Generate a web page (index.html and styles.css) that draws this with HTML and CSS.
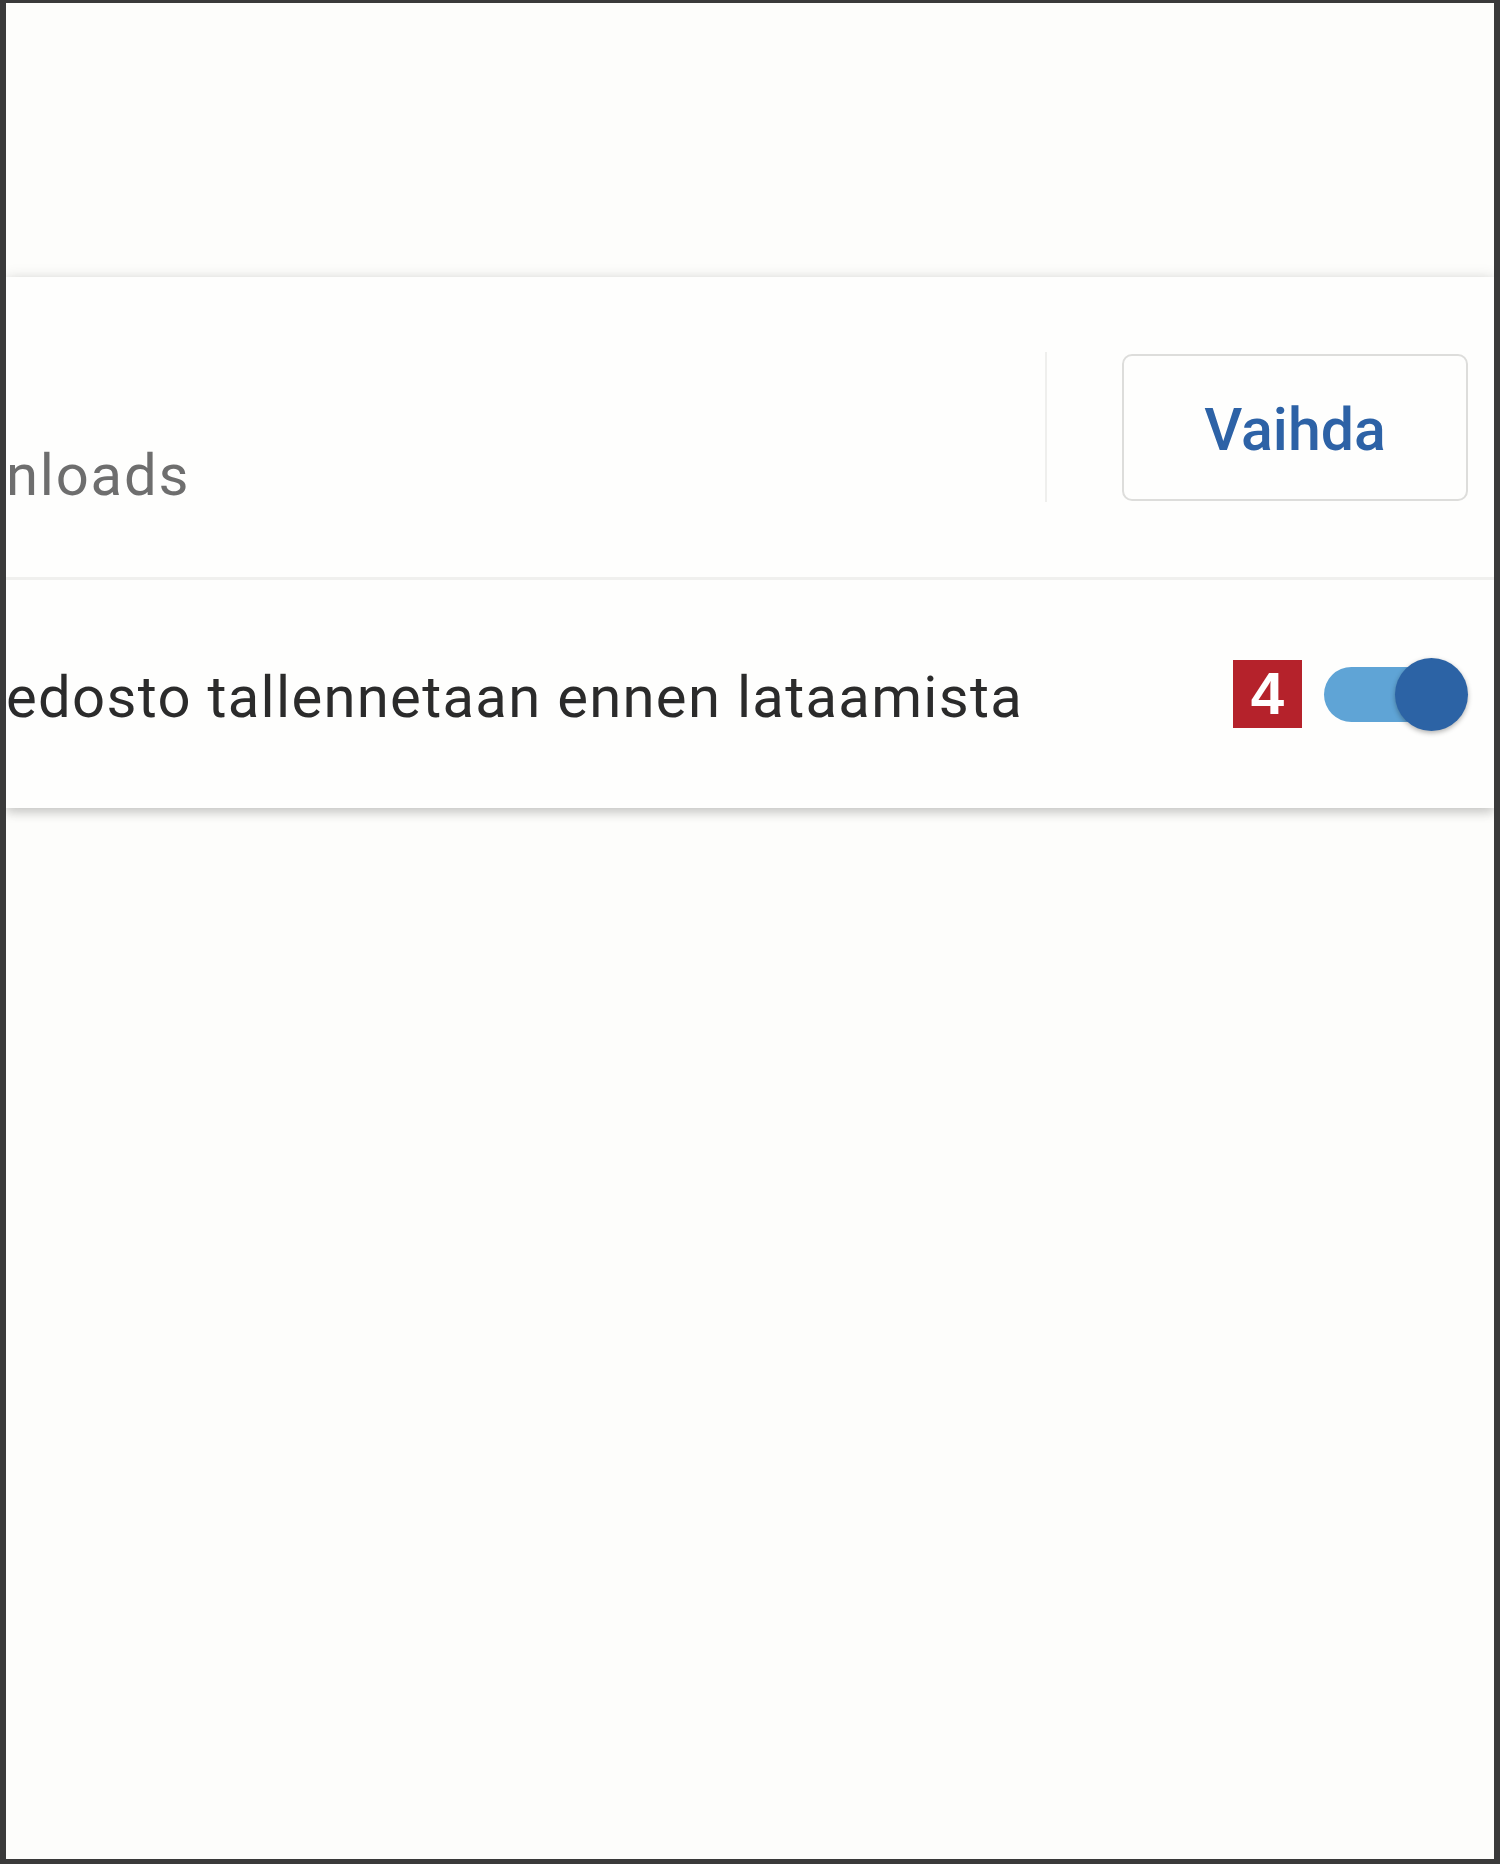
FILE: index.html
```html
<!DOCTYPE html>
<html lang="fi">
<head>
    <meta charset="UTF-8">
    <meta name="viewport" content="width=device-width, initial-scale=1.0">
    <title>Lataukset</title>
    <link rel="stylesheet" href="styles.css">
</head>
<body>
    <div class="frame">
        <div class="card">
            <div class="row location">
                <div class="path">nloads</div>
                <div class="vdivider"></div>
                <button class="btn">Vaihda</button>
            </div>
            <div class="row ask">
                <div class="label">edosto tallennetaan ennen lataamista</div>
                <span class="badge">4</span>
                <div class="toggle">
                    <div class="track"></div>
                    <div class="thumb"></div>
                </div>
            </div>
        </div>
    </div>
</body>
</html>
```

FILE: styles.css
```css
body {
    margin: 0;
    background: #fdfdfb;
    font-family: Roboto, "Liberation Sans", sans-serif;
}
.frame {
    box-sizing: border-box;
    height: 1864px;
    border-style: solid;
    border-color: #3a3a3a;
    border-width: 3px 6px 5px 6px;
    padding-top: 274px;
    overflow: hidden;
}
.card {
    background: #fefefd;
    box-shadow: 0 0 14px rgba(0, 0, 0, 0.1), 0 5px 10px rgba(0, 0, 0, 0.16);
}
.row {
    display: flex;
    align-items: center;
    padding-right: 26px;
}
.location {
    height: 300px;
}
.path {
    flex: 1;
    align-self: flex-start;
    padding-top: 169px;
    font-size: 58px;
    line-height: 58px;
    letter-spacing: 1.8px;
    color: #6e6e6e;
}
.vdivider {
    width: 2px;
    height: 150px;
    background: #efefed;
    margin-right: 75px;
}
.btn {
    box-sizing: border-box;
    width: 346px;
    height: 147px;
    background: transparent;
    border: 2px solid #dddddb;
    border-radius: 10px;
    font-family: Roboto, "Liberation Sans", sans-serif;
    font-weight: 500;
    font-size: 59px;
    color: #2d62a6;
    padding: 4px 0 0;
}
.ask {
    height: 228px;
    border-top: 3px solid #f0f0ee;
}
.label {
    flex: 1;
    margin-top: 6px;
    font-size: 58px;
    line-height: 58px;
    letter-spacing: 1.3px;
    color: #2b2b2b;
}
.badge {
    width: 69px;
    height: 68px;
    background: #b5222b;
    color: #fff;
    font-family: "Liberation Sans", sans-serif;
    font-weight: bold;
    font-size: 60px;
    line-height: 68px;
    text-align: center;
    margin-right: 22px;
}
.toggle {
    position: relative;
    width: 144px;
    height: 73px;
}
.track {
    position: absolute;
    left: 0;
    top: 9px;
    width: 124px;
    height: 55px;
    border-radius: 28px;
    background: #5fa4d6;
}
.thumb {
    position: absolute;
    right: 0;
    top: 0;
    width: 73px;
    height: 73px;
    border-radius: 50%;
    background: #2c63a5;
    box-shadow: 0 2px 5px rgba(0, 0, 0, 0.3);
}
```
